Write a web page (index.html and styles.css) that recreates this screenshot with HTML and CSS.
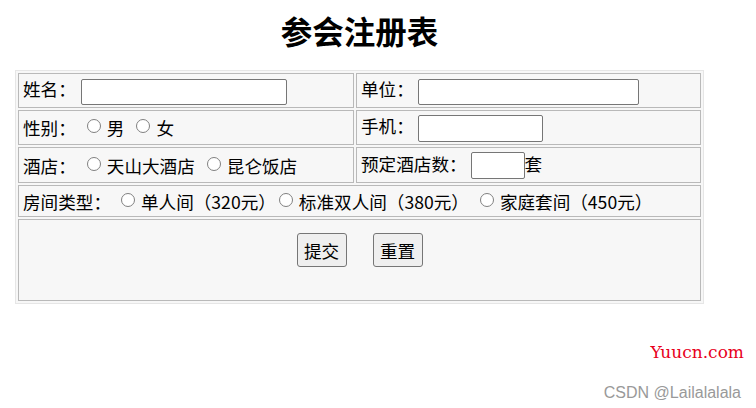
FILE: index.html
```html
<!DOCTYPE html>
<html lang="zh-CN">
<head>
<meta charset="utf-8">
<title>参会注册表</title>
<link rel="stylesheet" href="styles.css">
</head>
<body>
<form class="page">
<table class="reg">
<caption class="title">参会注册表</caption>
<tr class="r1"><td class="c1">姓名：<input type="text" class="in in-name"></td><td class="c2">单位：<input type="text" class="in in-unit"></td></tr>
<tr class="r2"><td class="c1">性别：<label class="opt"><input type="radio" name="sex">男</label><label class="opt opt-12"><input type="radio" name="sex">女</label></td><td class="c2">手机：<input type="text" class="in in-phone"></td></tr>
<tr class="r3"><td class="c1">酒店：<label class="opt"><input type="radio" name="hotel">天山大酒店</label><label class="opt opt-12"><input type="radio" name="hotel">昆仑饭店</label></td><td class="c2">预定酒店数：<input type="text" class="in in-count">套</td></tr>
<tr class="r4"><td colspan="2">房间类型：<label class="opt opt-10"><input type="radio" name="room">单人间（320元）</label><label class="opt opt-3"><input type="radio" name="room">标准双人间（380元）</label><label class="opt"><input type="radio" name="room">家庭套间（450元）</label></td></tr>
<tr class="r5"><td colspan="2"><button type="submit" class="btn">提交</button><button type="reset" class="btn">重置</button></td></tr>
</table>
</form>
<div class="wm-site">Yuucn.com</div>
<div class="wm-csdn">CSDN @Lailalalala</div>
</body>
</html>
```

FILE: styles.css
```css
* { box-sizing: border-box; }

body {
  margin: 0;
  font-family: "Noto Sans CJK SC", "Microsoft YaHei", sans-serif;
  font-size: 17.6px;
  color: #000;
  background: #fff;
}

.page {
  padding-left: 15px;
}

.reg {
  border: 1px solid #e6e6e6;
  border-spacing: 2px;
  background: #f7f7f7;
  width: 689px;
}

.title {
  font-size: 31.5px;
  font-weight: 700;
  line-height: 32px;
  padding: 14px 0 24px;
  background: #fff;
}

.reg td {
  border: 1px solid #b9b9b9;
  padding: 0 4px;
  vertical-align: middle;
  white-space: nowrap;
}

.c1 { width: 336px; }
.c2 { width: 345px; }

.r1 td { height: 35px; }
.r2 td { height: 35px; }
.r3 td { height: 36px; }
.r4 td { height: 32px; }
.r5 td {
  height: 82px;
  vertical-align: top;
  padding-top: 13px;
  text-align: center;
}

.in {
  height: 26px;
  border: 1px solid #767676;
  border-radius: 2px;
  background: #fff;
  padding: 0 2px;
  font: inherit;
  vertical-align: middle;
  margin: 0 0 0 4px;
}
.in-name { width: 206px; margin-left: 5px; }
.in-unit { width: 221px; }
.in-phone { width: 125px; height: 27px; }
.in-count { width: 54px; height: 27px; }

.opt input {
  -webkit-appearance: none;
  appearance: none;
  width: 14px;
  height: 14px;
  margin: 0 6px 0 11px;
  border: 1px solid #808080;
  border-radius: 50%;
  background: #fff;
  vertical-align: 2px;
}
.opt-12 input { margin-left: 12px; }
.opt-10 input { margin-left: 10px; }
.opt-3 input { margin-left: 3px; }

.btn {
  width: 50px;
  height: 34px;
  padding: 0;
  margin: 0 13px;
  font: inherit;
  color: #000;
  border: 1px solid #767676;
  border-radius: 3px;
  background: #efefef;
  vertical-align: top;
}

.wm-site {
  position: absolute;
  right: 12px;
  top: 342px;
  font-family: "DejaVu Serif", "Liberation Serif", serif;
  font-size: 17px;
  color: #e8001c;
}

.wm-csdn {
  position: absolute;
  right: 15px;
  top: 384px;
  font-family: "Liberation Sans", Arial, sans-serif;
  font-size: 16px;
  color: #999;
}
```
